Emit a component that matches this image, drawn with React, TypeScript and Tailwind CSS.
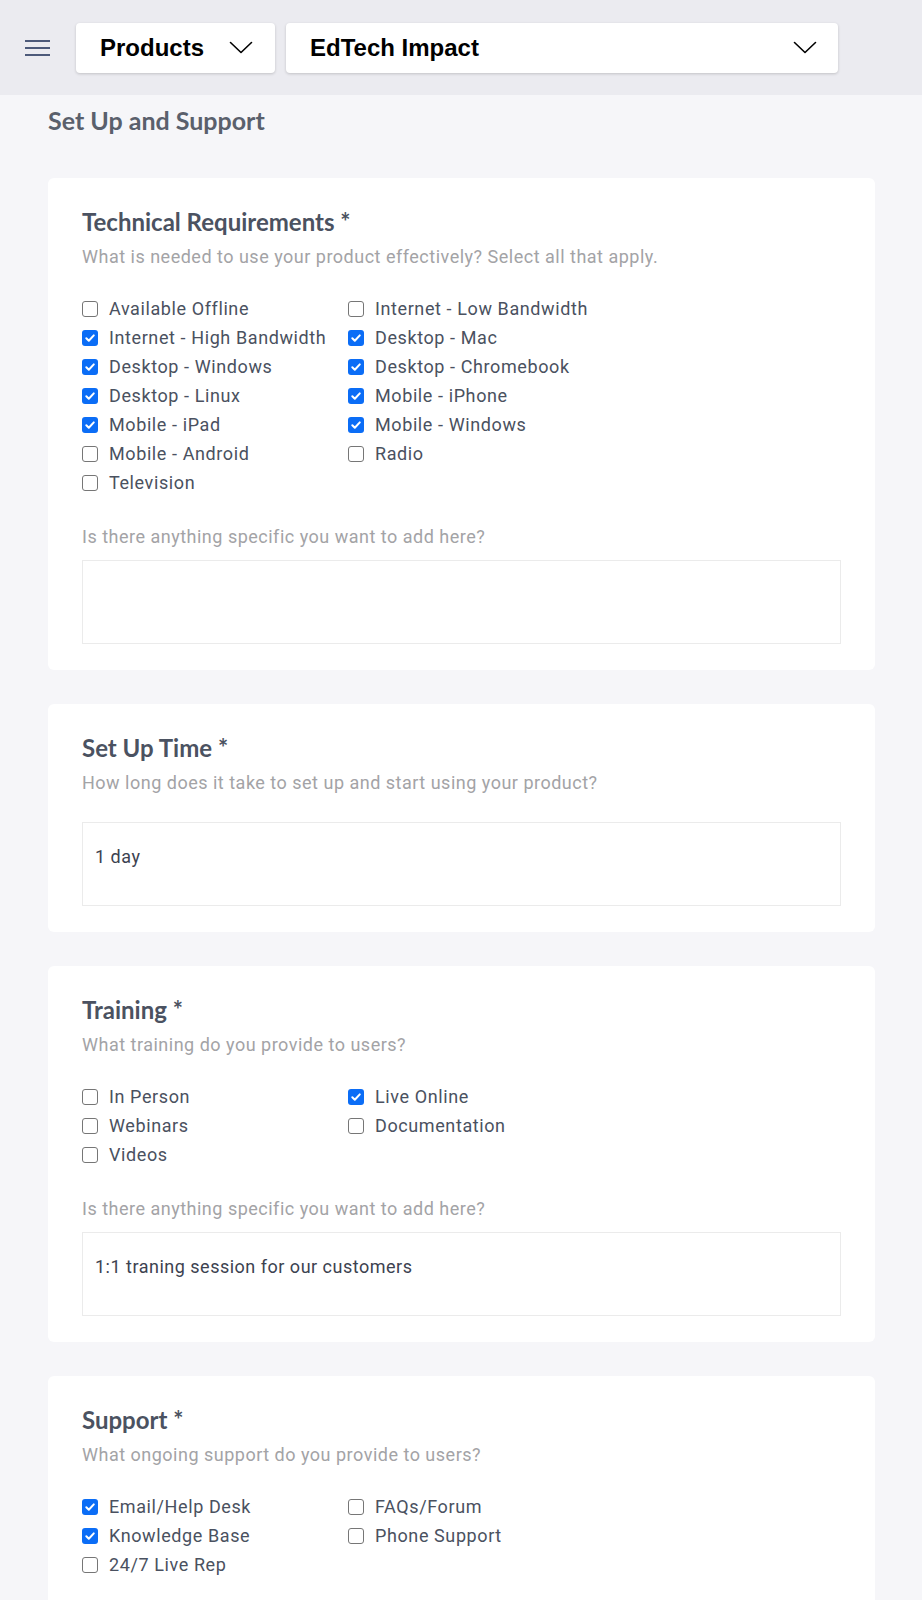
type Opt = { label: string; checked?: boolean };

const techLeft: Opt[] = [
  { label: "Available Offline" },
  { label: "Internet - High Bandwidth", checked: true },
  { label: "Desktop - Windows", checked: true },
  { label: "Desktop - Linux", checked: true },
  { label: "Mobile - iPad", checked: true },
  { label: "Mobile - Android" },
  { label: "Television" },
];
const techRight: Opt[] = [
  { label: "Internet - Low Bandwidth" },
  { label: "Desktop - Mac", checked: true },
  { label: "Desktop - Chromebook", checked: true },
  { label: "Mobile - iPhone", checked: true },
  { label: "Mobile - Windows", checked: true },
  { label: "Radio" },
];
const trainLeft: Opt[] = [{ label: "In Person" }, { label: "Webinars" }, { label: "Videos" }];
const trainRight: Opt[] = [{ label: "Live Online", checked: true }, { label: "Documentation" }];
const suppLeft: Opt[] = [
  { label: "Email/Help Desk", checked: true },
  { label: "Knowledge Base", checked: true },
  { label: "24/7 Live Rep" },
];
const suppRight: Opt[] = [{ label: "FAQs/Forum" }, { label: "Phone Support" }];

const heading = "font-['Lato',sans-serif]";
const body = "font-['Roboto',sans-serif]";

function Chevron() {
  return (
    <svg width="24" height="13" viewBox="0 0 24 13" fill="none" className="shrink-0">
      <path d="M1.5 1.5 12 11.5 22.5 1.5" stroke="black" strokeWidth="1.6" strokeLinecap="round" strokeLinejoin="round" />
    </svg>
  );
}

function Box({ checked }: { checked?: boolean }) {
  if (checked) {
    return (
      <span className="flex h-4 w-4 shrink-0 items-center justify-center rounded-[3px] bg-[#0b6df6]">
        <svg viewBox="0 0 12 12" className="h-3 w-3" fill="none">
          <path d="M2.3 6.3 4.8 8.8 9.8 3.4" stroke="white" strokeWidth="2" strokeLinecap="round" strokeLinejoin="round" />
        </svg>
      </span>
    );
  }
  return <span className="h-4 w-4 shrink-0 rounded-[3px] border border-[#767676] bg-white" />;
}

function CheckCol({ items }: { items: Opt[] }) {
  return (
    <div className="flex flex-col">
      {items.map((o) => (
        <div key={o.label} className="flex h-[29px] items-center gap-[11px]">
          <Box checked={o.checked} />
          <span className={`${body} text-[18px] tracking-[0.6px] whitespace-nowrap text-[#4a5160]`}>{o.label}</span>
        </div>
      ))}
    </div>
  );
}

function Card({ title, sub, children }: { title: string; sub: string; children: React.ReactNode }) {
  return (
    <section className="rounded-md bg-white px-[34px] pt-[30px] pb-[26px]">
      <h2 className={`${heading} h-7 text-[24px] leading-7 font-bold text-[#4b5261]`}>{title}</h2>
      <p className={`${body} mt-[9px] text-[18px] leading-6 tracking-[0.5px] text-[#a3a3a6]`}>{sub}</p>
      {children}
    </section>
  );
}

function Checks({ left, right }: { left: Opt[]; right: Opt[] }) {
  return (
    <div className="mt-[25px] grid grid-cols-[266px_1fr]">
      <CheckCol items={left} />
      <CheckCol items={right} />
    </div>
  );
}

function TextBox({ value }: { value?: string }) {
  return (
    <div className={`${body} h-[84px] border border-[#ebebeb] px-3 pt-[22px] text-[18px] leading-6 tracking-[0.5px] text-[#3c4250]`}>
      {value}
    </div>
  );
}

function Extra({ value }: { value?: string }) {
  return (
    <>
      <p className={`${body} mt-7 text-[18px] leading-6 tracking-[0.5px] text-[#a3a3a6]`}>Is there anything specific you want to add here?</p>
      <div className="mt-[11px]">
        <TextBox value={value} />
      </div>
    </>
  );
}

export default function App() {
  return (
    <div className="min-h-[1600px] bg-[#f6f6f9]">
      <header className="flex h-[95px] items-center bg-[#ebebf0] pl-[25px]">
        <div className="flex w-[25px] flex-col gap-[5px]">
          <span className="h-[2px] bg-[#4d5a7a]" />
          <span className="h-[2px] bg-[#4d5a7a]" />
          <span className="h-[2px] bg-[#4d5a7a]" />
        </div>
        <button className="ml-[26px] flex h-[50px] w-[199px] items-center justify-between rounded bg-white pr-[22px] pl-6 shadow-[0_1px_3px_rgba(0,0,0,0.18)]">
          <span className="font-['Liberation_Sans',Arial,sans-serif] text-[24px] font-bold text-black">Products</span>
          <Chevron />
        </button>
        <button className="ml-[11px] flex h-[50px] w-[552px] items-center justify-between rounded bg-white pr-[21px] pl-6 shadow-[0_1px_3px_rgba(0,0,0,0.18)]">
          <span className="font-['Liberation_Sans',Arial,sans-serif] text-[24px] font-bold text-black">EdTech Impact</span>
          <Chevron />
        </button>
      </header>

      <main className="pr-[47px] pl-[48px]">
        <h1 className={`${heading} mt-[11px] text-[25px] leading-7 font-bold text-[#5a606c]`}>Set Up and Support</h1>
        <div className="mt-[44px] flex flex-col gap-[34px]">
          <Card title="Technical Requirements *" sub="What is needed to use your product effectively? Select all that apply.">
            <Checks left={techLeft} right={techRight} />
            <Extra />
          </Card>
          <Card title="Set Up Time *" sub="How long does it take to set up and start using your product?">
            <div className="mt-[27px]">
              <TextBox value="1 day" />
            </div>
          </Card>
          <Card title="Training *" sub="What training do you provide to users?">
            <Checks left={trainLeft} right={trainRight} />
            <Extra value="1:1 traning session for our customers" />
          </Card>
          <Card title="Support *" sub="What ongoing support do you provide to users?">
            <Checks left={suppLeft} right={suppRight} />
            <div className="h-[60px]" />
          </Card>
        </div>
      </main>
    </div>
  );
}
